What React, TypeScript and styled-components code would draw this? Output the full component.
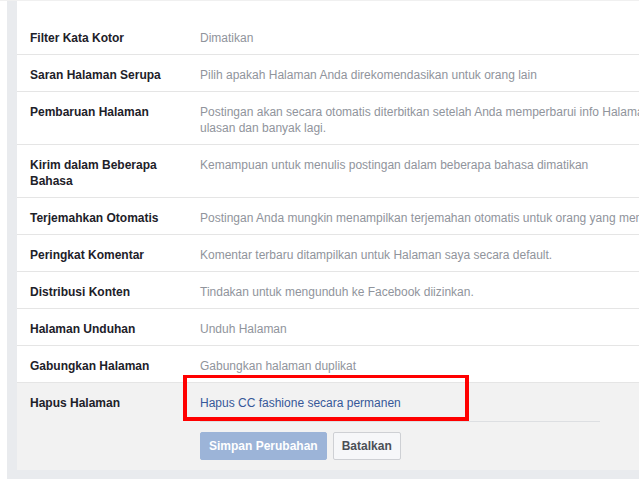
import React from "react";
import styled, { createGlobalStyle } from "styled-components";

const Global = createGlobalStyle`
  html, body { margin: 0; background: #fff; overflow: hidden; }
  body { font-family: "Liberation Sans", Arial, sans-serif; font-size: 12px; }
`;

const rows: { label: React.ReactNode; value: React.ReactNode }[] = [
  { label: "Filter Kata Kotor", value: "Dimatikan" },
  { label: "Saran Halaman Serupa", value: "Pilih apakah Halaman Anda direkomendasikan untuk orang lain" },
  {
    label: "Pembaruan Halaman",
    value: (
      <>
        Postingan akan secara otomatis diterbitkan setelah Anda memperbarui info Halaman, seperti jam buka,
        <br />
        ulasan dan banyak lagi.
      </>
    ),
  },
  {
    label: (
      <>
        Kirim dalam Beberapa
        <br />
        Bahasa
      </>
    ),
    value: "Kemampuan untuk menulis postingan dalam beberapa bahasa dimatikan",
  },
  { label: "Terjemahkan Otomatis", value: "Postingan Anda mungkin menampilkan terjemahan otomatis untuk orang yang membaca bahasa lain" },
  { label: "Peringkat Komentar", value: "Komentar terbaru ditampilkan untuk Halaman saya secara default." },
  { label: "Distribusi Konten", value: "Tindakan untuk mengunduh ke Facebook diizinkan." },
  { label: "Halaman Unduhan", value: "Unduh Halaman" },
  { label: "Gabungkan Halaman", value: "Gabungkan halaman duplikat" },
];

export default function App() {
  return (
    <>
      <Global />
      <Page>
        <Strip />
        <Panel>
          {rows.map((r, i) => (
            <Row key={i}>
              <Label>{r.label}</Label>
              <Value>{r.value}</Value>
            </Row>
          ))}
          <EditRow>
            <Label>Hapus Halaman</Label>
            <EditBody>
              <LinkText>Hapus CC fashione secara permanen</LinkText>
              <Divider />
              <Buttons>
                <Primary>Simpan Perubahan</Primary>
                <Secondary>Batalkan</Secondary>
              </Buttons>
            </EditBody>
            <Highlight />
          </EditRow>
        </Panel>
      </Page>
    </>
  );
}

const Page = styled.div`
  display: flex;
  padding-top: 12px;
  height: 479px;
  border-top: 1px solid #f0f0f0;
  box-sizing: border-box;
`;

const Strip = styled.div`
  width: 10px;
  margin-left: 7px;
  margin-top: -12px;
  background: #e9ebee;
  flex-shrink: 0;
`;

const Panel = styled.div`
  width: 760px;
  flex-shrink: 0;
  background: #fff;
  border-bottom: 9px solid #e9ebee;
  align-self: flex-start;
`;

const Row = styled.div`
  display: flex;
  padding: 12px 0 8px 13px;
  line-height: 16px;
  border-bottom: 1px solid #e5e5e5;
  &:first-child { padding-top: 17px; }
`;

const Label = styled.div`
  width: 170px;
  flex-shrink: 0;
  font-weight: bold;
  color: #1d2129;
`;

const Value = styled.div`
  color: #90949c;
  white-space: nowrap;
`;

const EditRow = styled.div`
  position: relative;
  display: flex;
  padding: 12px 0 10px 13px;
  line-height: 16px;
  background: #f2f2f2;
`;

const EditBody = styled.div`
  display: flex;
  flex-direction: column;
`;

const LinkText = styled.div`
  color: #365899;
  padding-bottom: 10px;
`;

const Divider = styled.div`
  width: 400px;
  height: 1px;
  background: #dddfe2;
  margin-bottom: 10px;
`;

const Buttons = styled.div`
  display: flex;
  gap: 6px;
`;

const Button = styled.button`
  font-family: inherit;
  font-size: 12px;
  font-weight: bold;
  height: 28px;
  padding: 0 8px;
  border-radius: 2px;
  cursor: pointer;
`;

const Primary = styled(Button)`
  background: #9cb4d8;
  border: 1px solid #9cb4d8;
  color: #fff;
`;

const Secondary = styled(Button)`
  background: #f6f7f9;
  border: 1px solid #ced0d4;
  color: #4b4f56;
`;

const Highlight = styled.div`
  position: absolute;
  left: 166px;
  top: -8px;
  width: 278px;
  height: 39px;
  border: 4px solid #f00;
  border-top-width: 3px;
`;
